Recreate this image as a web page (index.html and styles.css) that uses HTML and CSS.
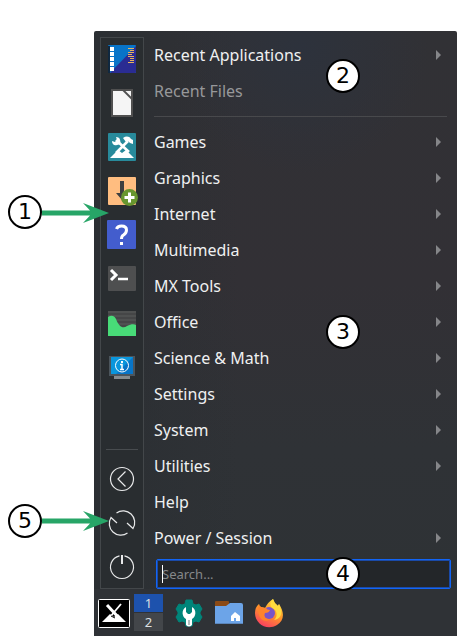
FILE: index.html
```html
<!DOCTYPE html>
<html lang="en">
<head>
<meta charset="utf-8">
<title>Application menu</title>
<link rel="stylesheet" href="styles.css">
</head>
<body>
<main class="desktop">
  <section class="menu">
    <nav class="favorites" aria-label="Favorites">
      <button class="fav" aria-label="File manager"><svg viewBox="0 0 30 30"><rect x="1" y="1" width="28" height="28" rx="1" fill="#0874c8"/><path d="M29 2v26q0 1-1 1H3z" fill="#2a2c92"/><path d="M1 2h2v27H1z" fill="#10283f"/><path d="M3 3h4v4H3zM3 8h4v4H3zM3 13h4v4H3zM3 18h4v4H3zM3 23h4v4H3z" fill="#fff"/><path d="M21 4.500h6M23 6.500h4M21 8.500h6M21 10.500h4M21 12.500h6M23 14.500h4M23 16.500h4M21 18.500h6" stroke="#e9b35c" fill="none"/></svg></button>
      <button class="fav" aria-label="Document"><svg viewBox="0 0 30 30"><path d="M5 2h20v26H5z" fill="#f5f5f5" stroke="#505050" stroke-width="2"/><path d="M16 2l9 9" stroke="#505050" stroke-width="1.800"/></svg></button>
      <button class="fav" aria-label="MX Tools"><svg viewBox="0 0 30 30"><rect x="1" y="1" width="28" height="28" rx="1" fill="#288a9b"/><path d="M3 26l8-8 4 3 4-3 8 8z" fill="#fff"/><path d="M9 8l13 12M21 9L9 21" stroke="#fff" stroke-width="2.600"/><path d="M9 5l1 3-2 2-3-1c0 3 2 5 5 4 3 0 4-3 3-5 0-2-2-3-4-3zM16 6c3-2 6-2 8 1l2 1v4l-3-1-2-2-2 1z" fill="#fff"/></svg></button>
      <button class="fav" aria-label="Package installer"><svg viewBox="0 0 32 30"><rect x="2" y="1" width="28" height="28" rx="1" fill="#ffbd80"/><path d="M14 5h4v12h4l-6 7-6-7h4z" fill="#3e3f40"/><circle cx="23.500" cy="21.500" r="8.500" fill="#67962f"/><path d="M23.500 16.500v10M18.500 21.500h10" stroke="#fff" stroke-width="3"/></svg></button>
      <button class="fav" aria-label="Help"><svg viewBox="0 0 30 30"><rect width="29" height="29" rx="1" fill="#435dcd"/><path d="M9.500 9q1-3 5-3 5 0 5 4 0 3-3 5-2 1-2 4" fill="none" stroke="#fff" stroke-width="3"/><path d="M13 22h3v3h-3z" fill="#fff"/></svg></button>
      <button class="fav" aria-label="Terminal"><svg viewBox="0 0 30 30"><rect x="1" y="2" width="28" height="25" rx="1" fill="#4e4f50"/><path d="M4 6l5 5-5 5" fill="none" stroke="#fff" stroke-width="3"/><path d="M11 15h10" stroke="#fff" stroke-width="2.500"/></svg></button>
      <button class="fav" aria-label="System monitor"><svg viewBox="0 0 30 30"><path d="M1 3h28v25H1z" fill="#454647"/><path d="M1 4h28M1 8h28M1 12h28M1 16h28" stroke="#5b5c5d"/><path d="M1 9c3-2 6-2 8 2 3 8 7 10 11 7 4-2 7-2 9-1v11H1z" fill="#48db78"/></svg></button>
      <button class="fav" aria-label="System information"><svg viewBox="0 0 30 30"><path d="M2 4h26v20H2z" fill="#4c555c"/><path d="M4 5h22v17H4z" fill="#0a96dc"/><path d="M26 5v17H9z" fill="#0875c8"/><path d="M7 24h16v3H7z" fill="#858b8e"/><circle cx="15" cy="13.500" r="6.500" fill="none" stroke="#fff"/><path d="M13 12.500h2v5M13 17.500h4" fill="none" stroke="#fff" stroke-width="1.500"/><path d="M14 9h2v2h-2z" fill="#fff"/></svg></button>
      <div class="session">
        <button class="fav" aria-label="Log out"><svg viewBox="0 0 30 30" class="line"><circle cx="15" cy="15" r="11.500"/><path d="M18.500 7.500L11 15l7.500 7.500"/></svg></button>
        <button class="fav" aria-label="Restart"><svg viewBox="0 0 30 30" class="line"><path d="M9.500 4.900A11.600 11.600 0 0 1 26 20.500L20 15M20.500 25.100A11.600 11.600 0 0 1 4 9.500L10 15"/></svg></button>
        <button class="fav" aria-label="Shut down"><svg viewBox="0 0 30 30" class="line"><path d="M12.500 3.800a11.500 11.500 0 1 0 5 0"/><path d="M15 3v9" stroke-width="2"/></svg></button>
      </div>
    </nav>
    <div class="content">
      <ul class="list recent">
        <li><button class="row sub">Recent Applications</button></li>
        <li><button class="row" disabled>Recent Files</button></li>
      </ul>
      <ul class="list">
        <li><button class="row sub">Games</button></li>
        <li><button class="row sub">Graphics</button></li>
        <li><button class="row sub">Internet</button></li>
        <li><button class="row sub">Multimedia</button></li>
        <li><button class="row sub">MX Tools</button></li>
        <li><button class="row sub">Office</button></li>
        <li><button class="row sub">Science &amp; Math</button></li>
        <li><button class="row sub">Settings</button></li>
        <li><button class="row sub">System</button></li>
        <li><button class="row sub">Utilities</button></li>
        <li><button class="row">Help</button></li>
        <li><button class="row sub">Power / Session</button></li>
      </ul>
      <div class="field"><input class="search" type="text" placeholder="Search..." aria-label="Search"><span class="caret"></span></div>
    </div>
  </section>
  <footer class="taskbar">
    <button class="task start" aria-label="Start menu"><svg viewBox="0 0 32 30"><rect x=".5" y="1.500" width="31" height="28" rx="1" fill="#000" stroke="#fff"/><path d="M4 24l8-8 4 3 4-3 8 8z" fill="#fff"/><path d="M9 7l12 13" stroke="#fff" stroke-width="3"/><path d="M23 6L12 19" stroke="#fff" stroke-width="1.800"/><path d="M13 18l4 2" stroke="#000"/></svg></button>
    <div class="pager"><button class="desk active">1</button><button class="desk">2</button></div>
    <button class="task tools" aria-label="MX Tools"><svg viewBox="0 0 32 30"><path d="M13 2h6l1 4 3 1 3-1 3 5-2 3v2l2 3-3 5-3-1-3 1-1 4h-6l-1-4-3-1-3 1-3-5 2-3v-2l-2-3 3-5 3 1 3-1z" fill="#00857a" stroke="#00857a" stroke-linejoin="round"/><path d="M13 9v5l2 2h2l2-2V9c5 3 4 10 0 12v6q-3 3-6 0v-6C9 19 8 12 13 9z" fill="#fff"/><path d="M16 22v5" stroke="#99aaa8" stroke-width="1.500"/></svg></button>
    <button class="task" aria-label="Files"><svg viewBox="0 0 32 30"><path d="M2 4q0-1 1-1h12q1 0 1 1v8H2z" fill="#8b4a16"/><path d="M2 8h11l4-3h11q2 0 2 2v18q0 1-1 1H3q-1 0-1-1z" fill="#6ca4e8"/><path d="M2 25h28v1H2z" fill="#5b86bb"/><path d="M22 14l5 4v5h-4v-3h-2v3h-3v-5z" fill="#fff"/></svg></button>
    <button class="task" aria-label="Firefox"><svg viewBox="0 0 32 30"><defs><linearGradient id="fire" x1=".8" y1="0" x2=".3" y2="1"><stop stop-color="#ffe33e"/><stop offset=".5" stop-color="#ff942a"/><stop offset="1" stop-color="#f83c62"/></linearGradient></defs><path d="M6 6q0 2 2 3l4 1q3-6 8-9 1 4 5 7l1-2c6 9 5 17-2 21C14 33 2 26 2 15q0-6 4-9z" fill="url(#fire)"/><circle cx="16" cy="15" r="6" fill="#7955c8"/><path d="M20 1c-4 4-3 8 1 10 4 3 3 9 0 11 6-1 8-5 7-10l-2-6-1 2q-4-3-5-7z" fill="#ffdb3e"/><path d="M6 6q0 2 2 3l5 1q1 2 4 2-1 3-5 3c-2 4 2 7 6 6-9 6-15-4-12-15z" fill="#ff842c"/></svg></button>
  </footer>
  <span class="badge b1">1</span><span class="badge b2">2</span><span class="badge b3">3</span><span class="badge b4">4</span><span class="badge b5">5</span>
  <svg class="arrow b1-arrow" viewBox="0 0 67 20"><path d="M0 7.500h48L41 0l26 10-26 10 7-7.500H0z"/></svg>
  <svg class="arrow b5-arrow" viewBox="0 0 67 20"><path d="M0 7.500h48L41 0l26 10-26 10 7-7.500H0z"/></svg>
</main>
</body>
</html>
```
FILE: styles.css
```css
* { box-sizing: border-box; }
body { margin: 0; background: #fff; font-family: "Noto Sans", sans-serif; }
button { border: 0; padding: 0; margin: 0; background: none; color: inherit; font: inherit; }
svg { display: block; }
.desktop { position: relative; min-height: 100vh; padding: 31px 11px 0 94px; }
.menu {
  display: flex;
  gap: 10px;
  padding: 6px 6px 0;
  color: #eff0f1;
  background: radial-gradient(circle at 57% 3%, #2d323c, transparent 22%), linear-gradient(90deg, #2b2f33, transparent 40%), linear-gradient(#313135, #323035 45%, #2f3236 75%, #2e3235);
  border-radius: 2px 2px 0 0;
}
.favorites {
  display: flex;
  flex-direction: column;
  align-items: center;
  width: 44px;
  border: 1px solid #43474a;
  background: #292d30;
}
.fav { display: flex; align-items: center; justify-content: center; width: 32px; height: 44px; }
.favorites > .fav { padding-bottom: 2px; }
.session .fav { padding-top: 2px; }
.fav svg { height: 30px; max-width: 32px; }
.session { margin-top: auto; padding-top: 6px; border-top: 1px solid #484c4f; }
.line { fill: none; stroke: #e8e9ea; stroke-width: 1.2; }
.content { flex: 1; min-width: 0; }
.list { list-style: none; margin: 0; padding: 0; }
.recent { padding-bottom: 7px; margin-bottom: 7px; margin-right: 4px; border-bottom: 1px solid #48494c; }
.row { display: flex; align-items: center; justify-content: space-between; width: 100%; height: 36px; font-size: 16px; line-height: 24px; text-align: left; }
.list .row { padding-right: 10px; }
.recent .row { padding-right: 6px; }
.row:disabled { color: #97989a; }
.sub::after { content: ""; border-left: 5px solid #858689; border-top: 5px solid transparent; border-bottom: 5px solid transparent; }
.field { position: relative; margin: 3px 0 0 2px; }
.search { display: block; width: 100%; height: 30px; padding: 0 5px; border: 1px solid #1265f5; border-radius: 2px; box-shadow: inset 0 0 0 1px #1a4aa8; background: #232629; color: #eff0f1; font: 13px "Noto Sans", sans-serif; }
.search::placeholder { color: #85888a; opacity: 1; }
.caret { position: absolute; left: 6px; top: 6px; width: 1px; height: 18px; background: #fff; }
.taskbar { display: flex; align-items: center; height: 47px; padding: 0 4px; background: #2f3236; color: #dfe1e2; }
.task { width: 32px; height: 30px; margin-right: 8px; }
.task svg { width: 32px; height: 30px; }
.start { margin-right: 4px; }
.pager { display: grid; gap: 1px; width: 29px; margin-right: 10px; }
.desk { height: 18px; font-size: 13px; line-height: 18px; background: #43464a; }
.active { background: #1d52ad; }
.badge { position: absolute; width: 34px; height: 34px; border: 2px solid #000; border-radius: 50%; background: #fff; color: #000; font: 22px/30px "DejaVu Sans", sans-serif; text-align: center; }
.b1 { left: 8px; top: 195px; }
.b2 { left: 326px; top: 59px; }
.b3 { left: 326px; top: 315px; }
.b4 { left: 326px; top: 557px; }
.b5 { left: 8px; top: 504px; }
.arrow { position: absolute; left: 42px; width: 67px; height: 20px; fill: #27a567; }
.b1-arrow { top: 203px; }
.b5-arrow { top: 511px; }
```
